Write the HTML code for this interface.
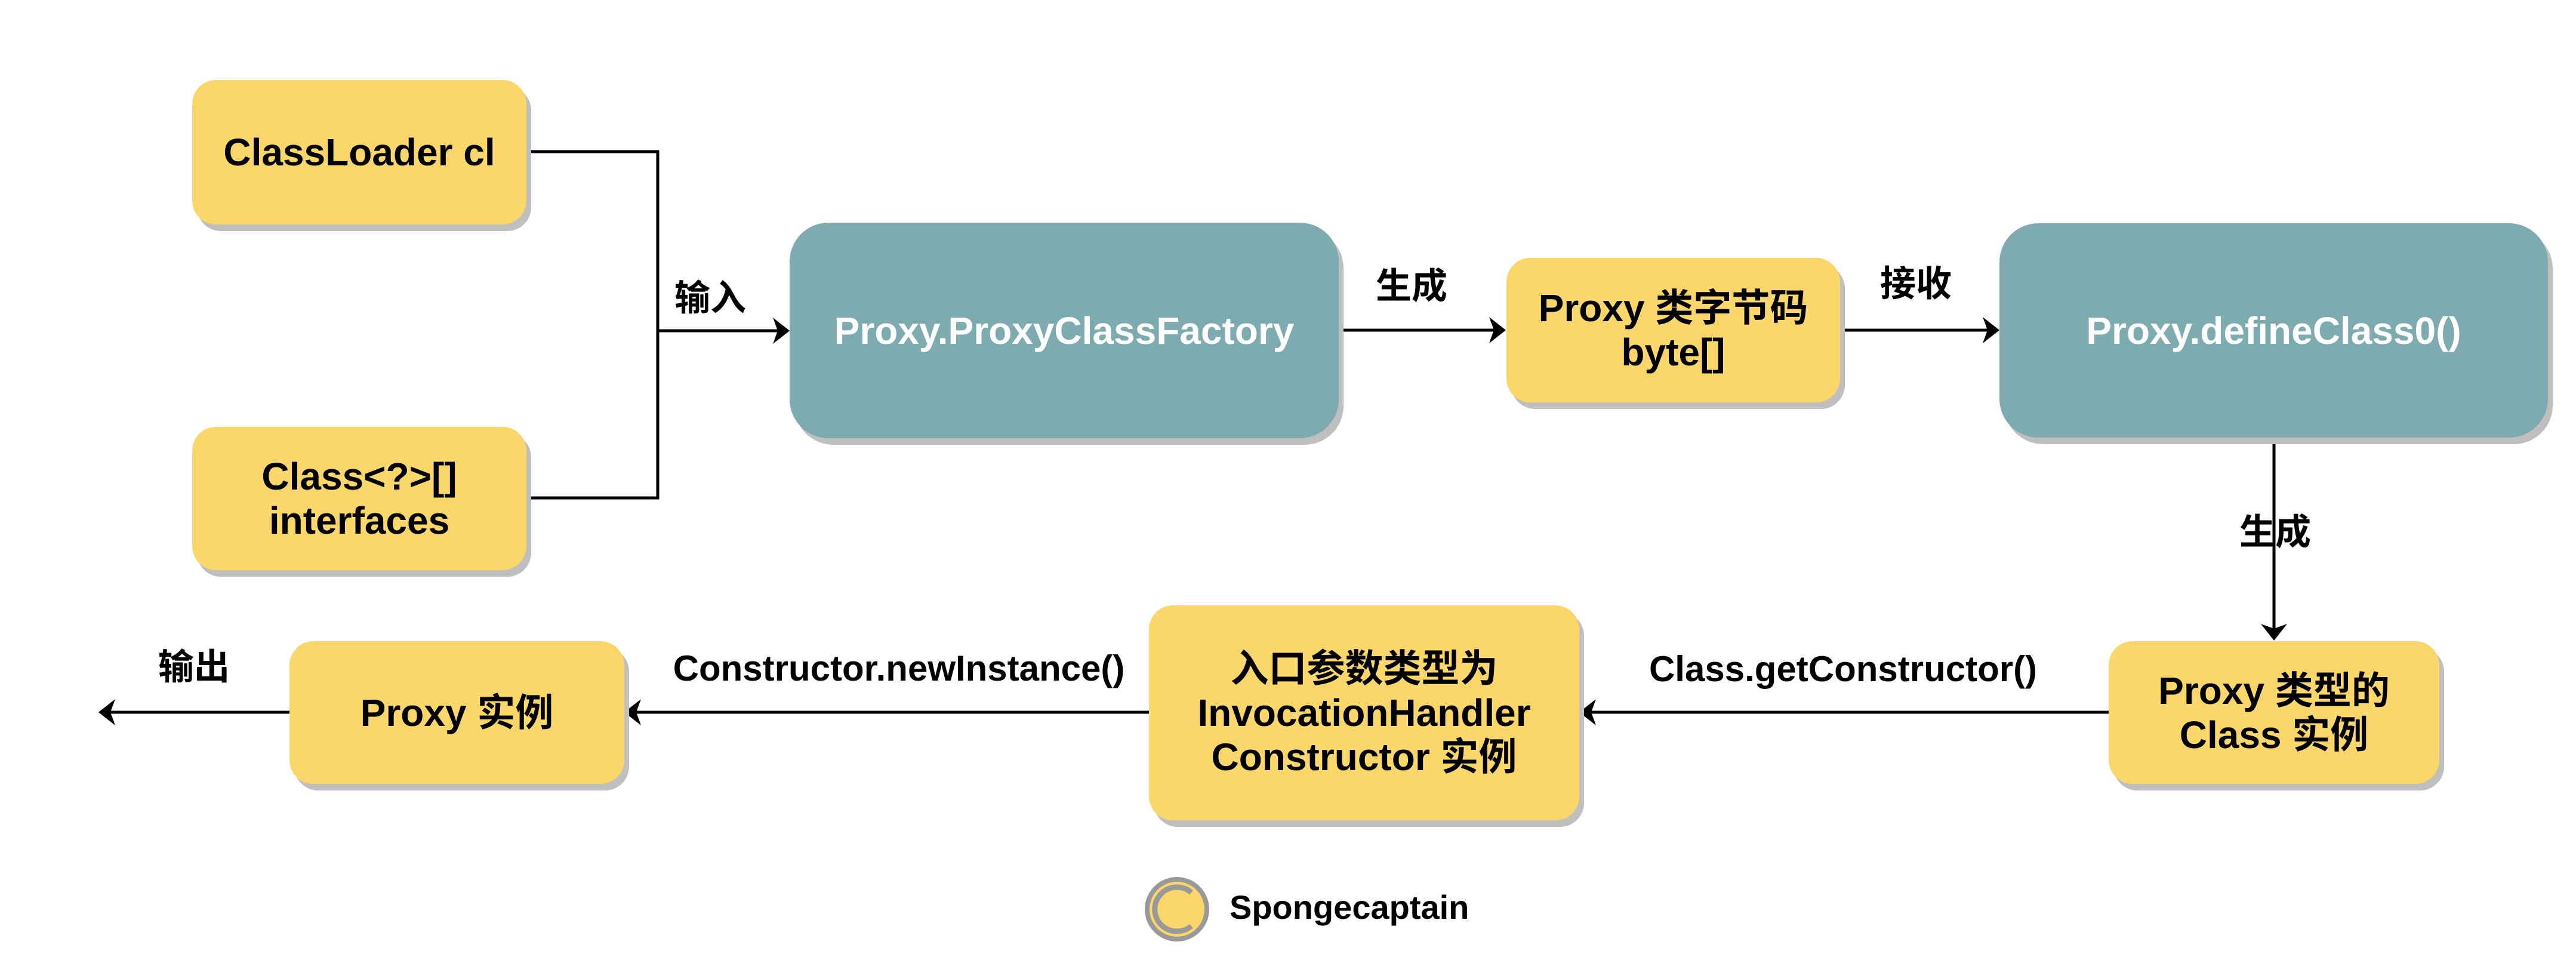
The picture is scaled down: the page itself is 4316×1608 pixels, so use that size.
<!DOCTYPE html>
<html><head><meta charset="utf-8"><style>
html,body{margin:0;padding:0;background:#fff;}
body{width:4316px;height:1608px;position:relative;overflow:hidden;font-family:"Liberation Sans","Noto Sans CJK SC",sans-serif;font-weight:bold;}
.b{position:absolute;display:flex;align-items:center;justify-content:center;text-align:center;box-shadow:8px 11px 0 #bfbfbf;color:#000;font-size:64px;line-height:74px;}
.y{background:#fbd66a;border-radius:40px;}
.t{background:#7eabaf;border-radius:65px;color:#fff;}
.l{position:absolute;font-size:60px;line-height:64px;white-space:nowrap;transform:translate(-50%,-50%);}
svg{position:absolute;left:0;top:0;}
</style></head><body>
<svg width="4316" height="1608">
<g stroke="#000" stroke-width="5" fill="none">
<path d="M882 254 H1102 V834 H882"/>
<path d="M1102 554 H1305"/>
<path d="M2243 553 H2505"/>
<path d="M3083 553 H3332"/>
<path d="M3810 734 V1055"/>
<path d="M3533 1193 H2664"/>
<path d="M1925 1193 H1064"/>
<path d="M485 1193 H183"/>
</g>
<g fill="#000">
<path d="M1323 554 l-28 -22 l8 22 l-8 22z"/>
<path d="M2523 553 l-28 -22 l8 22 l-8 22z"/>
<path d="M3350 553 l-28 -22 l8 22 l-8 22z"/>
<path d="M3810 1073 l-22 -28 l22 8 l22 -8z"/>
<path d="M2646 1193 l28 -22 l-8 22 l8 22z"/>
<path d="M1046 1193 l28 -22 l-8 22 l8 22z"/>
<path d="M165 1193 l28 -22 l-8 22 l8 22z"/>
</g>
<circle cx="1972" cy="1523" r="50" fill="#fbd66a" stroke="#999" stroke-width="8"/>
<path d="M1996 1495 A37 37 0 1 0 1996 1551" fill="none" stroke="#999" stroke-width="9"/>
</svg>
<div class="b y" style="left:322px;top:134px;width:560px;height:242px;">ClassLoader cl</div>
<div class="b y" style="left:322px;top:715px;width:560px;height:240px;">Class&lt;?&gt;[]<br>interfaces</div>
<div class="b t" style="left:1323px;top:373px;width:920px;height:361px;">Proxy.ProxyClassFactory</div>
<div class="b y" style="left:2524px;top:432px;width:559px;height:242px;">Proxy 类字节码<br>byte[]</div>
<div class="b t" style="left:3350px;top:374px;width:919px;height:359px;">Proxy.defineClass0()</div>
<div class="b y" style="left:3533px;top:1074px;width:554px;height:239px;">Proxy 类型的<br>Class 实例</div>
<div class="b y" style="left:1925px;top:1014px;width:721px;height:360px;">入口参数类型为<br>InvocationHandler<br>Constructor 实例</div>
<div class="b y" style="left:485px;top:1074px;width:561px;height:239px;">Proxy 实例</div>
<div class="l" style="left:1190px;top:500px;">输入</div>
<div class="l" style="left:2365px;top:480px;">生成</div>
<div class="l" style="left:3210px;top:476px;">接收</div>
<div class="l" style="left:3812px;top:892px;">生成</div>
<div class="l" style="left:3088px;top:1121px;">Class.getConstructor()</div>
<div class="l" style="left:1506px;top:1120px;">Constructor.newInstance()</div>
<div class="l" style="left:325px;top:1118px;">输出</div>
<div class="l" style="left:2060px;top:1520px;transform:translate(0,-50%);font-size:56px;">Spongecaptain</div>
</body></html>
